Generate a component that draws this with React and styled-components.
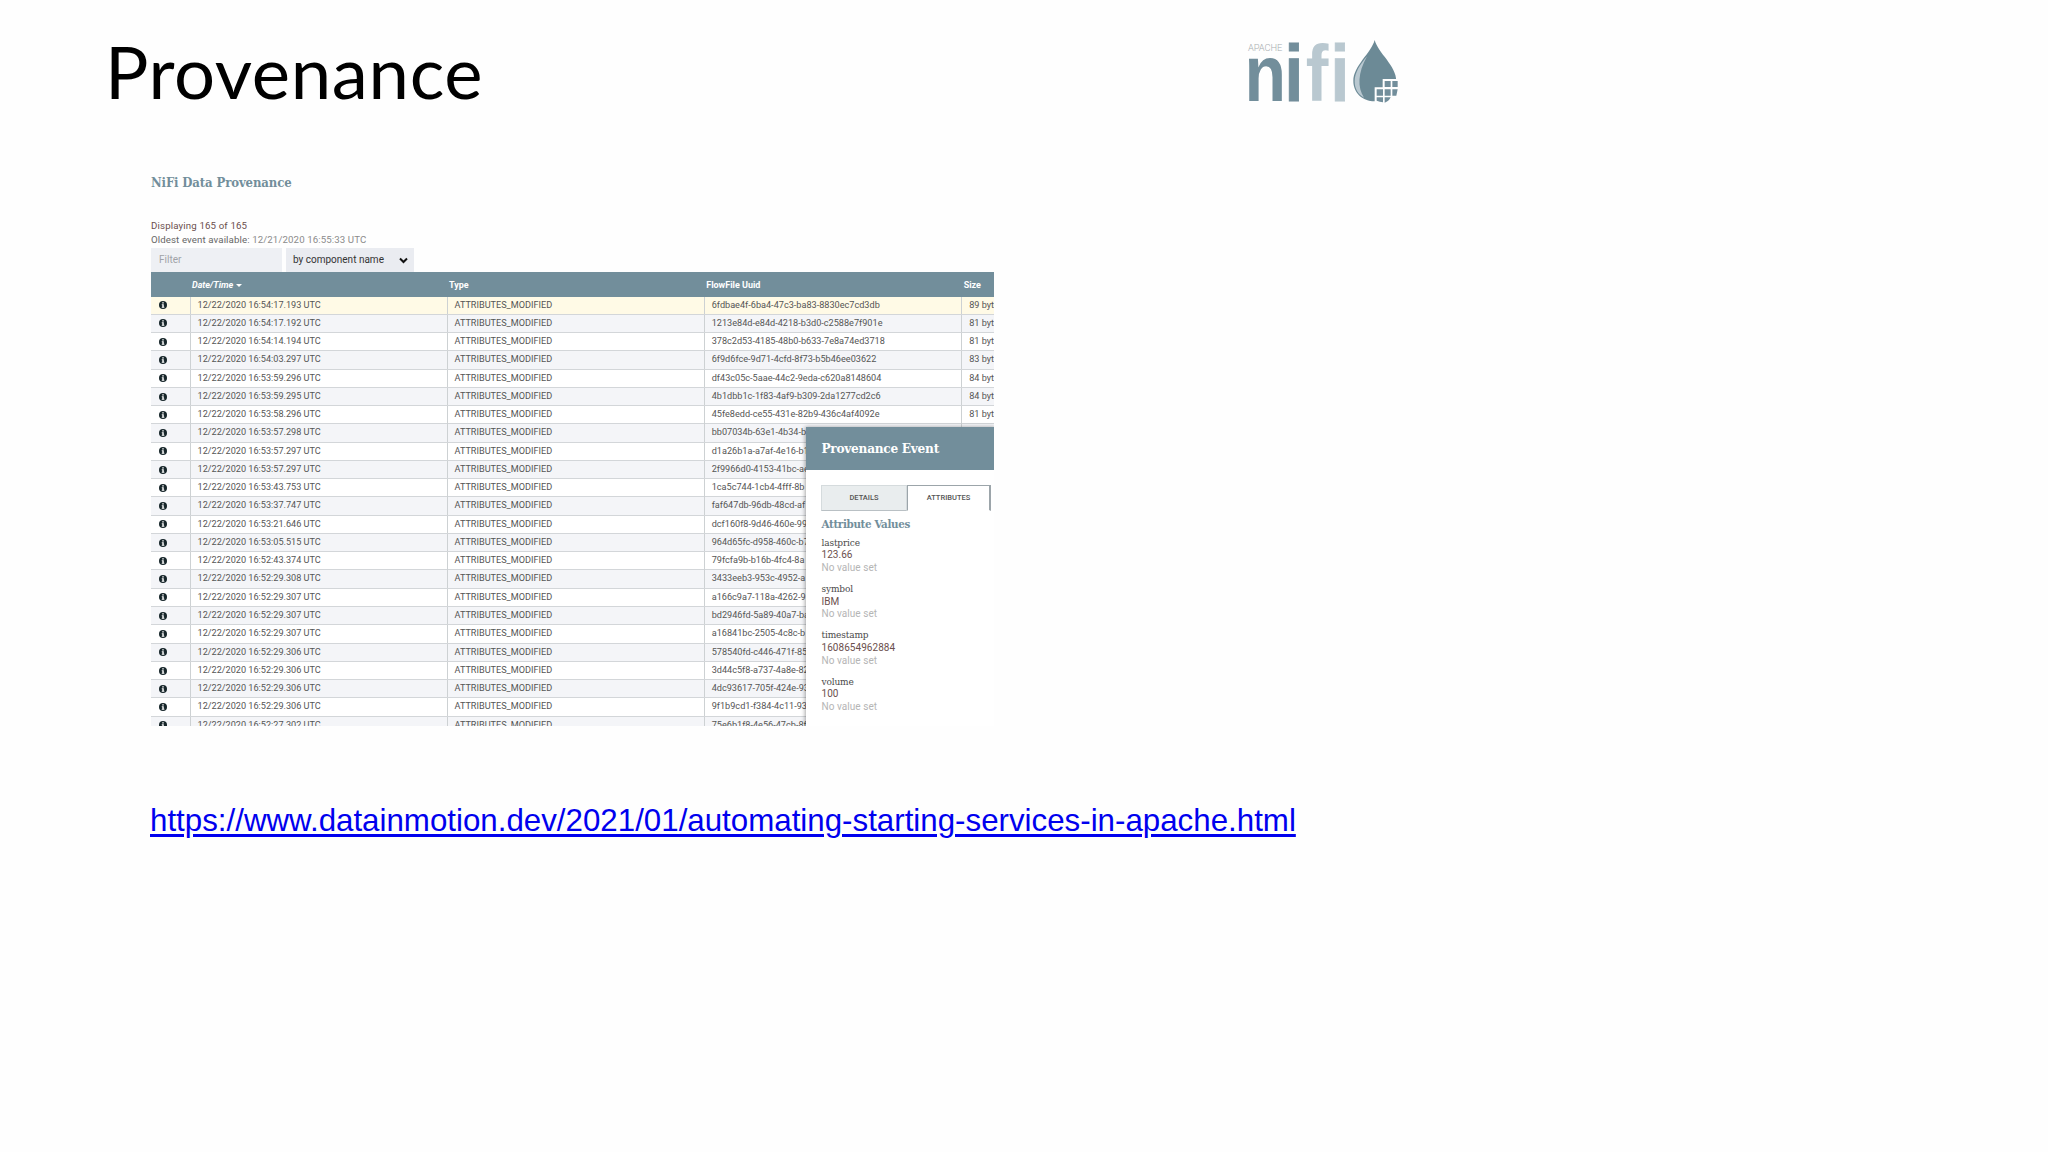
import React from 'react';
import styled, { createGlobalStyle } from 'styled-components';

const GlobalStyle = createGlobalStyle`
    * {
        box-sizing: border-box;
    }
    body {
        margin: 0;
        background: #fefefe;
        font-family: Roboto, 'Liberation Sans', sans-serif;
    }
`;

const slab = `'DejaVu Serif Condensed', 'DejaVu Serif', serif`;

const Slide = styled.main`
    width: 2048px;
    height: 1152px;
    overflow: hidden;
    background: #fefefe;
`;

const SlideHeader = styled.header`
    display: flex;
    height: 173px;
    padding: 25px 0 0 105px;
`;

const Title = styled.h1`
    width: 1125px;
    margin: 0;
    color: #000;
    font: 400 72.5px/92px Lato, sans-serif;
    letter-spacing: 0.65px;
    white-space: nowrap;
`;

const Logo = styled.svg`
    width: 190px;
    height: 90px;
    overflow: visible;
`;

const Capture = styled.section`
    position: relative;
    width: 842.5px;
    height: 553px;
    margin-left: 151px;
    overflow: hidden;
`;

const CaptureTitle = styled.h2`
    height: 46px;
    margin: 0;
    color: #728e9b;
    font: 700 13px/20px ${slab};
    letter-spacing: -0.12px;
    white-space: nowrap;
`;

const Summary = styled.div`
    height: 29px;
    color: #6b4f4d;
    font-size: 9.7px;
    line-height: 14px;
    letter-spacing: 0.14px;
`;

const Oldest = styled.div`
    color: #666;
    letter-spacing: 0.1px;
    & > span {
        color: #8b8b8b;
    }
`;

const Filters = styled.div`
    display: flex;
    gap: 4px;
    height: 24px;
    font-size: 10px;
    line-height: 24px;
`;

const FilterInput = styled.div`
    width: 131px;
    padding-left: 8px;
    background: #eef0f4;
    color: #a0a3a8;
`;

const FilterSelect = styled.div`
    display: flex;
    align-items: center;
    justify-content: space-between;
    width: 128px;
    padding: 0 6px 0 7px;
    background: #eaecf1;
    color: #333;
`;

const TableHead = styled.div`
    display: grid;
    grid-template-columns: 38.5px 257px 257.2px 257.5px 1fr;
    height: 24.5px;
    background: #728e9b;
    color: #fff;
    font-size: 9px;
    font-weight: 700;
    line-height: 26px;
`;

const HeadCell = styled.div`
    padding-left: 2.5px;
    font-style: ${props => props.$sorted ? 'italic' : 'normal'};
    white-space: nowrap;
`;

const SortArrow = styled.i`
    display: inline-block;
    margin-left: 3px;
    border: 3px solid transparent;
    border-top-color: #fff;
    border-bottom: 0;
    vertical-align: 1.5px;
`;

const Row = styled.div`
    display: grid;
    grid-template-columns: 38.5px 257px 257.2px 257.5px 1fr;
    height: 18.28px;
    border-bottom: 1px solid #d3d6d9;
    background: ${props => props.$selected ? '#fffae6' : props.$striped ? '#f4f5f8' : '#fff'};
    color: #555;
    font-size: 9.15px;
    line-height: 17.4px;
`;

const Cell = styled.div`
    padding-left: 7px;
    border-left: 1px solid #cdd1d3;
    white-space: nowrap;
`;

const InfoCell = styled.div`
    display: flex;
    align-items: center;
    padding-left: 8px;
`;

const Dialog = styled.aside`
    position: absolute;
    top: 254px;
    left: 655px;
    width: 190px;
    height: 299px;
    background: #fff;
    box-shadow: -1px 0 4px rgba(0, 0, 0, 0.35);
`;

const DialogHeader = styled.div`
    height: 42.5px;
    padding-left: 15.5px;
    background: #728e9b;
    color: #fff;
    font: 700 13.5px/43px ${slab};
    letter-spacing: -0.27px;
`;

const Tabs = styled.div`
    display: flex;
    margin: 15px 0 0 15px;
    height: 26px;
`;

const Tab = styled.div`
    width: ${props => props.$active ? '84px' : '86px'};
    border: 1px solid ${props => props.$active ? '#9ca5aa' : '#d5dbdd'};
    border-bottom-color: ${props => props.$active ? 'transparent' : '#b9c0c4'};
    border-right-width: ${props => props.$active ? '2px' : '1px'};
    background: ${props => props.$active ? '#fff' : '#e9edee'};
    color: #555;
    font-size: 7.5px;
    font-weight: 500;
    line-height: 24px;
    text-align: center;
`;

const AttributesTitle = styled.h3`
    margin: 4px 0 4px 15.5px;
    color: #728e9b;
    font: 700 11.5px/18px ${slab};
    letter-spacing: -0.35px;
`;

const Attribute = styled.div`
    height: 46.4px;
    padding-left: 15.5px;
    color: #6b4f4d;
    font-size: 10px;
    line-height: 12.7px;
    letter-spacing: 0.05px;
`;

const AttributeName = styled.div`
    color: #4a4a4a;
    font: 400 10px/12.7px ${slab};
    letter-spacing: -0.15px;
`;

const Unset = styled.div`
    color: #b5b5b5;
`;

const SourceLink = styled.a`
    display: block;
    width: max-content;
    margin: 77px 0 0 150px;
    color: #0000ee;
    font: 400 31.29px/36px 'Liberation Sans', Arial, sans-serif;
    text-decoration: underline;
    text-decoration-thickness: 2.5px;
    text-underline-offset: 3px;
`;

const events = [
    ['16:54:17.193', '6fdbae4f-6ba4-47c3-ba83-8830ec7cd3db', '89'],
    ['16:54:17.192', '1213e84d-e84d-4218-b3d0-c2588e7f901e', '81'],
    ['16:54:14.194', '378c2d53-4185-48b0-b633-7e8a74ed3718', '81'],
    ['16:54:03.297', '6f9d6fce-9d71-4cfd-8f73-b5b46ee03622', '83'],
    ['16:53:59.296', 'df43c05c-5aae-44c2-9eda-c620a8148604', '84'],
    ['16:53:59.295', '4b1dbb1c-1f83-4af9-b309-2da1277cd2c6', '84'],
    ['16:53:58.296', '45fe8edd-ce55-431e-82b9-436c4af4092e', '81'],
    ['16:53:57.298', 'bb07034b-63e1-4b34-b'],
    ['16:53:57.297', 'd1a26b1a-a7af-4e16-b1'],
    ['16:53:57.297', '2f9966d0-4153-41bc-ae'],
    ['16:53:43.753', '1ca5c744-1cb4-4fff-8b'],
    ['16:53:37.747', 'faf647db-96db-48cd-af'],
    ['16:53:21.646', 'dcf160f8-9d46-460e-99'],
    ['16:53:05.515', '964d65fc-d958-460c-b7'],
    ['16:52:43.374', '79fcfa9b-b16b-4fc4-8a'],
    ['16:52:29.308', '3433eeb3-953c-4952-a'],
    ['16:52:29.307', 'a166c9a7-118a-4262-9'],
    ['16:52:29.307', 'bd2946fd-5a89-40a7-ba'],
    ['16:52:29.307', 'a16841bc-2505-4c8c-b'],
    ['16:52:29.306', '578540fd-c446-471f-85'],
    ['16:52:29.306', '3d44c5f8-a737-4a8e-82'],
    ['16:52:29.306', '4dc93617-705f-424e-93'],
    ['16:52:29.306', '9f1b9cd1-f384-4c11-93'],
    ['16:52:27.302', '75e6b1f8-4e56-47cb-8f']
];

const attributes = [
    ['lastprice', '123.66'],
    ['symbol', 'IBM'],
    ['timestamp', '1608654962884'],
    ['volume', '100']
];

const InfoIcon = () => (
    <svg width="8" height="8" viewBox="0 0 16 16">
        <circle cx="8" cy="8" r="8" fill="#17262a" />
        <path d="M6.5 2.5h3v2.5h-3zM5.5 6.5h4v5h1.2v2H5.5v-2h1.2v-3H5.5z" fill="#fff" />
    </svg>
);

const NifiLogo = () => (
    <Logo viewBox="0 0 570 270">
        <text x="54" y="77" textLength="103" fill="#a9aeb1" fontFamily="Roboto, sans-serif" fontWeight="300" fontSize="28">APACHE</text>
        {/* wordmark letters are squeezed to 85% of their width */}
        <g transform="scale(0.85 1)" fontFamily="'Liberation Sans', sans-serif" fontWeight="700" fontSize="240">
            <text x="51" y="227" fill="#728e9b">n</text>
            <text x="192" y="227" fill="#728e9b" stroke="#728e9b" strokeWidth="3">i</text>
            <text x="267" y="227" fill="#b9c8d0">f</text>
            <text x="355" y="227" fill="#b9c8d0" stroke="#b9c8d0" strokeWidth="3">i</text>
        </g>
        <path d="M434 45C424 84 370 122 370 168c0 36 28 61 64 61s65-25 65-61c0-46-55-84-65-123z" fill="#6c8a96" />
        <path d="M411 94c-22 27-37 49-37 75 0 22 10 39 28 49-20-30-19-74 9-124z" fill="#b9c8d0" />
        <path d="M434 187h24v-25h52v76h-76z" fill="#fefefe" />
        <path d="M464 168h18v18h-18zM487 168h16v18h-16zM440 193h19v19h-19zM464 193h18v19h-18zM487 193h16l-4 19h-12zM440 217h19v15q-10-1-19-5zM464 217h18q-6 13-18 16z" fill="#728e9b" />
    </Logo>
);

export default () => (
    <Slide>
        <GlobalStyle />
        <SlideHeader>
            <Title>Provenance</Title>
            <NifiLogo />
        </SlideHeader>
        <Capture>
            <CaptureTitle>NiFi Data Provenance</CaptureTitle>
            <Summary>
                Displaying 165 of 165
                <Oldest>Oldest event available: <span>12/21/2020 16:55:33 UTC</span></Oldest>
            </Summary>
            <Filters>
                <FilterInput>Filter</FilterInput>
                <FilterSelect>
                    by component name
                    <svg width="9" height="7" viewBox="0 0 9 7">
                        <path d="M1 1.5l3.5 3.5L8 1.5" fill="none" stroke="#111" strokeWidth="2" />
                    </svg>
                </FilterSelect>
            </Filters>
            <TableHead>
                <HeadCell />
                <HeadCell $sorted>Date/Time<SortArrow /></HeadCell>
                <HeadCell>Type</HeadCell>
                <HeadCell>FlowFile Uuid</HeadCell>
                <HeadCell>Size</HeadCell>
            </TableHead>
            {events.map(([time, uuid, size], idx) => (
                <Row key={idx} $selected={idx === 0} $striped={idx % 2 === 1}>
                    <InfoCell><InfoIcon /></InfoCell>
                    <Cell>12/22/2020 {time} UTC</Cell>
                    <Cell>ATTRIBUTES_MODIFIED</Cell>
                    <Cell>{uuid}</Cell>
                    <Cell>{size && `${size} bytes`}</Cell>
                </Row>
            ))}
            <Dialog>
                <DialogHeader>Provenance Event</DialogHeader>
                <Tabs>
                    <Tab>DETAILS</Tab>
                    <Tab $active>ATTRIBUTES</Tab>
                </Tabs>
                <AttributesTitle>Attribute Values</AttributesTitle>
                {attributes.map(([name, value]) => (
                    <Attribute key={name}>
                        <AttributeName>{name}</AttributeName>
                        {value}
                        <Unset>No value set</Unset>
                    </Attribute>
                ))}
            </Dialog>
        </Capture>
        <SourceLink href="https://www.datainmotion.dev/2021/01/automating-starting-services-in-apache.html">
            https://www.datainmotion.dev/2021/01/automating-starting-services-in-apache.html
        </SourceLink>
    </Slide>
);
